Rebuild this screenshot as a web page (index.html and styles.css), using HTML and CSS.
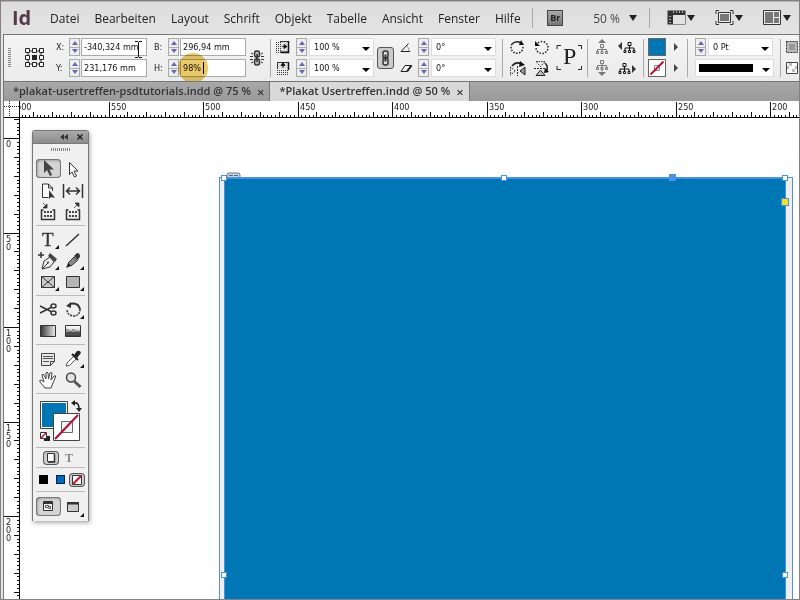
FILE: index.html
```html
<!DOCTYPE html>
<html lang="de">
<head>
<meta charset="utf-8">
<title>Plakat Usertreffen.indd</title>
<link rel="stylesheet" href="styles.css">
</head>
<body>
<div class="window">
  <header class="menubar">
    <span class="logo">Id</span>
    <nav class="menu">
      <a href="#">Datei</a><a href="#">Bearbeiten</a><a href="#">Layout</a><a href="#">Schrift</a><a href="#">Objekt</a><a href="#">Tabelle</a><a href="#">Ansicht</a><a href="#">Fenster</a><a href="#">Hilfe</a>
    </nav>
    <div class="appbar">
      <span class="divider"></span>
      <button class="bridge" aria-label="Bridge">Br</button>
      <button class="zoomlevel">50 %<i class="caret"></i></button>
      <span class="divider"></span>
      <button class="viewbtn" aria-label="Anzeigeoptionen"><svg width="19" height="16" viewBox="0 0 19 16"><path d="M.5.5h18v14H.5z" fill="#333"/><path d="M6 5h12v9H6z" fill="#e2e2e2"/><path d="M6.500 1v2M9.500 1v2M12.500 1v2M15.500 1v2M2 6.500h2M2 9.500h2M2 12.500h2" stroke="#aaa"/></svg><i class="caret"></i></button>
      <button class="viewbtn" aria-label="Bildschirmmodus"><svg width="19" height="16" viewBox="0 0 19 16"><path d="M4 .5H1V4M15 .5h3V4M1 11v3.500h3M18 11v3.500h-3" fill="none" stroke="#333"/><path d="M3.500 2.500h12v10h-12z" fill="#eee" stroke="#333"/><path d="M5 4h9v7H5z" fill="#777"/></svg><i class="caret"></i></button>
      <button class="viewbtn" aria-label="Dokumente anordnen"><svg width="19" height="16" viewBox="0 0 19 16"><path d="M.5.5h17v14H.5z" fill="#eee" stroke="#333"/><path d="M2 2h8v11H2zM11 2h5v5h-5zM11 8h5v5h-5z" fill="#777"/></svg><i class="caret"></i></button>
    </div>
  </header>

  <section class="control">
    <span class="grip tall"></span>
    <svg class="tall" width="20" height="20" viewBox="0 0 20 20"><path d="M3 3h13v13H3z" fill="none" stroke="#333"/><g fill="#fff" stroke="#222"><path d="M.5.5h4v4h-4zM7.500.5h4v4h-4zM14.500.5h4v4h-4zM.5 7.500h4v4h-4zM14.500 7.500h4v4h-4zM.5 14.500h4v4h-4zM7.500 14.500h4v4h-4zM14.500 14.500h4v4h-4z"/></g><path d="M7 7h5v5H7z" fill="#222"/></svg>
    <label for="fx">X:</label>
    <span class="spin"><button aria-label="X erhöhen"></button><button aria-label="X verringern"></button></span>
    <span class="field"><input id="fx" value="-340,324 mm"><svg class="ibeam" width="7" height="17" viewBox="0 0 7 17"><path d="M0 .5h3M4 .5h3M3.500 1v15M0 16.500h3M4 16.500h3" stroke="#111" fill="none"/></svg></span>
    <label for="fb">B:</label>
    <span class="spin"><button aria-label="Breite erhöhen"></button><button aria-label="Breite verringern"></button></span>
    <span class="field"><input id="fb" value="296,94 mm"></span>
    <svg class="tall" width="15" height="16" viewBox="0 0 15 16"><g fill="#bbb" stroke="#333" stroke-width="1.500"><rect x="4.500" y="1" width="5" height="6" rx="2"/><rect x="4.500" y="9" width="5" height="6" rx="2"/><path d="M7 4v8"/></g><path d="M1 3l2 1M0 6.500h3M0 9.500h3M1 13l2-1M13 3l-2 1M14 6.500h-3M14 9.500h-3M13 13l-2-1" stroke="#333"/></svg>
    <span class="sep tall"></span>
    <svg width="14" height="14" viewBox="0 0 14 14"><path d="M4 1.500h8.500v10.500H4" fill="#e0e0e0" stroke="#333"/><path d="M12.500 1v11.500H5" fill="none" stroke="#111" stroke-width="1.500"/><path d="M6 6.500h3M8 4.500l3 2-3 2z" stroke="#111" fill="#111" stroke-width=".8"/><path d="M.5 2v11M2.500 2v11M4.500 2v11" stroke="#333" stroke-dasharray="1 1"/></svg>
    <span class="spin"><button aria-label="Skalierung X erhöhen"></button><button aria-label="Skalierung X verringern"></button></span>
    <span class="combo"><select aria-label="Skalierung X"><option>100 %</option></select></span>
    <button class="linkbtn tall" aria-label="Proportionen beibehalten"><svg width="10" height="16" viewBox="0 0 10 16"><g fill="#ddd" stroke="#333" stroke-width="1.500"><rect x="2" y="1" width="5" height="7" rx="2"/><rect x="2" y="8" width="5" height="7" rx="2"/><path d="M4.500 4.500v7" stroke-width="2"/></g></svg></button>
    <svg width="12" height="12" viewBox="0 0 12 12"><path d="M8.500 2.500L1 10.500h9" fill="none" stroke="#222"/><path d="M7 5q2 2 2 5" fill="none" stroke="#333" stroke-dasharray="1 1"/></svg>
    <span class="spin"><button aria-label="Drehwinkel erhöhen"></button><button aria-label="Drehwinkel verringern"></button></span>
    <span class="combo"><select aria-label="Drehwinkel"><option>0°</option></select></span>
    <span class="sep tall"></span>
    <svg width="15" height="15" viewBox="0 0 15 15"><path d="M13 7A6 6 0 1 1 2 4" fill="none" stroke="#222" stroke-width="1.500" stroke-dasharray="1.500 1.500"/><path d="M2 4q4-4 9-1" stroke="#222" stroke-width="1.500" fill="none"/><path d="M11 0l3 5-5 0z" fill="#111"/></svg>
    <svg width="15" height="15" viewBox="0 0 15 15"><path d="M4 3A6 6 0 1 1 2 8" fill="none" stroke="#222" stroke-width="1.500" stroke-dasharray="1.500 1.500"/><path d="M1 1v5h5z" fill="#111"/></svg>
    <span class="pmark tall"><svg width="25" height="25" viewBox="0 0 25 25"><path d="M0 4V.5h4M21 .5h3.500V4M0 21v3.500h4M21 24.500h3.500V21" fill="none" stroke="#222"/><text x="6" y="19">P</text></svg></span>
    <span class="sep tall"></span>
    <svg class="dim" width="14" height="16" viewBox="0 0 14 16"><path d="M7 0l4 4H3z" fill="#777"/><path d="M5.500 5.500h3v3h-3zM1.500 12.500h2v2h-2zM6 12.500h2v2H6zM10.500 12.500h2v2h-2zM7 8.500v4M2.500 12v-1.500h9V12" fill="none" stroke="#777"/></svg>
    <svg width="18" height="13" viewBox="0 0 18 13"><path d="M4 1v8L0 5z" fill="#333"/><path d="M10 1.500h3v3h-3zM6 9.500h2v2H6zM10.500 9.500h2v2h-2zM15 9.500h2v2h-2zM11.500 5v4M7 9V7h9v2" fill="none" stroke="#111"/></svg>
    <span class="sep tall"></span>
    <button class="swatch fill" aria-label="Fläche"></button>
    <button class="more" aria-label="Flächenfarbe wählen"></button>
    <span class="sep tall"></span>
    <span class="spin"><button aria-label="Kontur erhöhen"></button><button aria-label="Kontur verringern"></button></span>
    <span class="combo"><select aria-label="Konturstärke"><option>0 Pt</option></select></span>
    <span class="sep tall"></span>
    <svg width="14" height="14" viewBox="0 0 14 14"><path d="M1.500 1.500h11v11h-11z" fill="#bbb" stroke="#333" stroke-dasharray="2 1"/><path d="M4 4h6v6H4z" fill="#999"/></svg>

    <label for="fy" class="row2 c3">Y:</label>
    <span class="spin"><button aria-label="Y erhöhen"></button><button aria-label="Y verringern"></button></span>
    <span class="field"><input id="fy" value="231,176 mm"></span>
    <label for="fh">H:</label>
    <span class="spin"><button aria-label="Höhe erhöhen"></button><button aria-label="Höhe verringern"></button></span>
    <span class="field"><input id="fh" value="98%"><i class="textcaret"></i><i class="clickring"></i></span>
    <svg class="c11" width="14" height="14" viewBox="0 0 14 14"><path d="M1.500 8V1.500h11V8" fill="#e0e0e0" stroke="#333"/><path d="M12.500 1v8" stroke="#111" stroke-width="1.500"/><path d="M7 7V4M5 4.500l2-2.500 2 2.500z" stroke="#111" fill="#111"/><path d="M1 9.500h12M1 11.500h12M1 13.500h12" stroke="#333" stroke-dasharray="1 1"/></svg>
    <span class="spin"><button aria-label="Skalierung Y erhöhen"></button><button aria-label="Skalierung Y verringern"></button></span>
    <span class="combo"><select aria-label="Skalierung Y"><option>100 %</option></select></span>
    <svg class="c15" width="12" height="12" viewBox="0 0 12 12"><path d="M1 9.500L5 3.500h6.500L7 9.500z" fill="none" stroke="#222"/><path d="M7 9.500l4.500-6" stroke="#222" stroke-width="2"/></svg>
    <span class="spin"><button aria-label="Scherwinkel erhöhen"></button><button aria-label="Scherwinkel verringern"></button></span>
    <span class="combo"><select aria-label="Scherwinkel"><option>0°</option></select></span>
    <svg class="c19" width="16" height="15" viewBox="0 0 16 15"><path d="M2 5q4-5 10-2" stroke="#222" fill="none" stroke-width="1.500"/><path d="M10 0l5 4-6 2z" fill="#111"/><path d="M.5 6v8l5-4z" fill="none" stroke="#333" stroke-dasharray="1.500 1"/><path d="M15 6v8l-5-4z" fill="#999" stroke="#222"/><path d="M7.500 5v10" stroke="#222" stroke-dasharray="2 1"/></svg>
    <svg width="16" height="15" viewBox="0 0 16 15"><path d="M2 .5h9l-4.500 5z" fill="none" stroke="#333" stroke-dasharray="1.500 1"/><path d="M2 14.500h9L6.500 9z" fill="#bbb" stroke="#222"/><path d="M0 7.500h12" stroke="#222" stroke-dasharray="2 1"/><path d="M11 2q4 4 1 9" stroke="#222" fill="none" stroke-width="1.500"/><path d="M10 12l1-5 4 4z" fill="#111"/></svg>
    <svg class="c23 dim" width="14" height="16" viewBox="0 0 14 16"><path d="M7 16l4-4H3z" fill="#777"/><path d="M5.500.5h3v3h-3zM1.500 7.500h2v2h-2zM6 7.500h2v2H6zM10.500 7.500h2v2h-2zM7 3.500v8M2.500 7V5.500h9V7" fill="none" stroke="#777"/></svg>
    <svg width="18" height="13" viewBox="0 0 18 13"><path d="M14 3v8l4-4z" fill="#333"/><path d="M5 1.500h3v3H5zM1 9.500h2v2H1zM5.500 9.500h2v2h-2zM10 9.500h2v2h-2zM6.500 5v4M2 9V7h9v2" fill="none" stroke="#111"/></svg>
    <button class="swatch none c26" aria-label="Kontur"><svg width="16" height="16" viewBox="0 0 16 16"><path d="M5.500 5.500h5v5h-5z" fill="none" stroke="#888"/><path d="M1.500 14.500l13-13" stroke="#c00f32" stroke-width="2"/></svg></button>
    <button class="more" aria-label="Konturfarbe wählen"></button>
    <button class="combo strokestyle" aria-label="Konturart"><i></i></button>
    <svg class="c32" width="14" height="14" viewBox="0 0 14 14"><path d="M1.500 1.500h11v11h-11z" fill="#fff" stroke="#444"/><path d="M4 2h3v3H4zM10 5h2v3h-2zM7 8h3v3H7zM2 5h2v3H2z" fill="#bbb"/></svg>
  </section>

  <div class="tabs">
    <div class="tab"><a href="#">*plakat-usertreffen-psdtutorials.indd @ 75 %</a><button aria-label="Schließen">×</button></div>
    <div class="tab active"><a href="#">*Plakat Usertreffen.indd @ 50 %</a><button aria-label="Schließen">×</button></div>
  </div>

  <main class="document">
    <div class="corner"></div>
    <div class="ruler-h" id="rh"></div>
    <div class="ruler-v" id="rv"></div>
    <div class="canvas">
      <div class="page"></div>
      <div class="object"></div>
      <i class="handle h1"></i><i class="handle h2"></i><i class="handle h3"></i><i class="handle h4"></i><i class="handle h5"></i>
      <i class="handle solid"></i><i class="handle corneropt"></i>
      <svg class="linkbadge" width="15" height="6" viewBox="0 0 15 6"><path d="M1 5V3q0-2 2-2h9q2 0 2 2v2" fill="#c9d5df" stroke="#678"/><path d="M3 3.500h4M8 3.500h4" stroke="#567"/></svg>

      <aside class="tools">
        <div class="toolhead"><svg width="8" height="6" viewBox="0 0 8 6"><path d="M4 0v6L0 3zM8 0v6L4 3z" fill="#333"/></svg><svg width="6" height="6" viewBox="0 0 6 6"><path d="M.5.5l5 5M5.500.5l-5 5" stroke="#222" stroke-width="1.500"/></svg></div>
        <div class="toolgrip"></div>
        <div class="toolset">
          <button class="on" aria-label="Auswahl"><svg viewBox="0 0 24 20"><path d="M8 1v13l3-3 3 6 2-1-2.500-5.500H18z" fill="#444"/></svg></button>
          <button aria-label="Direktauswahl"><svg viewBox="0 0 24 20"><path d="M8.500 2.500v12l2.500-2.500 2.500 5 2-1-2.500-5h4z" fill="#fff" stroke="#333"/></svg></button>
          <button aria-label="Seite"><svg viewBox="0 0 24 20"><path d="M16.500 10V7l-4-4h-6v13.500h6M12.500 3v4h4" fill="#f8f8f8" stroke="#333"/><path d="M13 9v9l2-2 4 1z" fill="#333"/></svg></button>
          <button aria-label="Lücke"><svg viewBox="0 0 24 20"><path d="M2.500 3v14M21.500 3v14" stroke="#333" stroke-width="1.500"/><path d="M6 10h12M9 6.500L5.500 10 9 13.500M15 6.500l3.500 3.500-3.500 3.500" fill="none" stroke="#333" stroke-width="1.500"/></svg></button>
          <button aria-label="Inhaltsaufnahme"><svg viewBox="0 0 24 20"><path d="M7.500 8H5.500v9.500h13V8h-2" fill="none" stroke="#333" stroke-width="1.500"/><path d="M8 9h2v2H8zM11 9h2v2h-2zM14 9h2v2h-2zM8 13h2v2H8zM11 13h2v2h-2zM14 13h2v2h-2z" fill="#444"/><path d="M7 1l3 3M11 2v4H7z" stroke="#333" stroke-width=".8" fill="#333"/></svg></button>
          <button aria-label="Inhaltsplatzierung"><svg viewBox="0 0 24 20"><path d="M7.500 8H5.500v9.500h13V8h-2" fill="none" stroke="#333" stroke-width="1.500"/><path d="M8 9h2v2H8zM11 9h2v2h-2zM14 9h2v2h-2zM8 13h2v2H8zM11 13h2v2h-2zM14 13h2v2h-2z" fill="#444"/><path d="M13 6l4-4M14 1h4v4z" stroke="#333" stroke-width=".8" fill="#333"/></svg></button>
        </div>
        <div class="toolset">
          <button class="sub" aria-label="Text"><svg viewBox="0 0 24 20"><text class="ttool" x="6" y="16">T</text></svg></button>
          <button aria-label="Linie"><svg viewBox="0 0 24 20"><path d="M5 16L18 4" stroke="#333" stroke-width="1.500"/></svg></button>
          <button class="sub" aria-label="Zeichenstift"><svg viewBox="0 0 24 20"><path d="M5 1v6M2 4h6" stroke="#333" stroke-width="1.500"/><path d="M6 18l2-8 6-4 4 5-4 5z" fill="#eee" stroke="#333"/><path d="M6 18l6-6" stroke="#333"/><circle cx="12" cy="11.500" r="1" fill="#333"/><path d="M14 2l7 6-2 3-7-6z" fill="#444"/></svg></button>
          <button class="sub" aria-label="Buntstift"><svg viewBox="0 0 24 20"><path d="M5 17l2-5 3 3z" fill="#222"/><path d="M7 12l6-6 3.500 3.500L10 15z" fill="#888" stroke="#333"/><path d="M13 5l3-3q3 0 3 3.500L17 9z" fill="#333"/></svg></button>
          <button class="sub" aria-label="Rechteckrahmen"><svg viewBox="0 0 24 20"><path d="M5.500 4.500h13v11h-13zl13 11M18.500 4.500l-13 11" fill="#ccc" stroke="#333"/></svg></button>
          <button class="sub" aria-label="Rechteck"><svg viewBox="0 0 24 20"><path d="M5.500 4.500h13v11h-13z" fill="#b5b5b5" stroke="#333"/></svg></button>
        </div>
        <div class="toolset">
          <button aria-label="Schere"><svg viewBox="0 0 24 20"><path d="M4 6l12 6M4 13l12-6" stroke="#333" stroke-width="1.500"/><ellipse cx="17.500" cy="6" rx="2.500" ry="2" fill="none" stroke="#333" stroke-width="1.500"/><ellipse cx="17.500" cy="13" rx="2.500" ry="2" fill="none" stroke="#333" stroke-width="1.500"/></svg></button>
          <button class="sub" aria-label="Drehen"><svg viewBox="0 0 24 20"><path d="M9 4q8-2 10 5" fill="none" stroke="#333" stroke-width="2"/><path d="M19 9q0 7-7 7-6-1-6-7" fill="none" stroke="#333" stroke-width="1.500" stroke-dasharray="2 1"/><path d="M5 6l5-4v6z" fill="#333"/></svg></button>
          <button aria-label="Verlaufsfarbfeld"><svg viewBox="0 0 24 20"><defs><linearGradient id="g1"><stop stop-color="#333"/><stop offset="1" stop-color="#eee"/></linearGradient><linearGradient id="g2" x2="0" y2="1"><stop stop-color="#fff"/><stop offset=".4" stop-color="#ddd"/><stop offset=".6" stop-color="#555"/><stop offset="1" stop-color="#444"/></linearGradient></defs><path d="M4.500 4.500h15v11h-15z" fill="url(#g1)" stroke="#333"/></svg></button>
          <button aria-label="Weiche Verlaufskante"><svg viewBox="0 0 24 20"><path d="M4.500 4.500h15v11h-15z" fill="url(#g2)" stroke="#333"/><path d="M5 8h3v3H5zM11 8h3v3h-3z" fill="#999"/></svg></button>
        </div>
        <div class="toolset">
          <button aria-label="Notiz"><svg viewBox="0 0 24 20"><path d="M5.500 4.500h13v8l-4 4h-9zM14.500 16.500v-4h4" fill="#e8e8e8" stroke="#444"/><path d="M7 7.500h10M7 9.500h10M7 12.500h6" stroke="#555"/></svg></button>
          <button class="sub" aria-label="Pipette"><svg viewBox="0 0 24 20"><path d="M5 17l1-3 7-7 2.500 2.500-7 7z" fill="#fff" stroke="#555"/><path d="M11 5l6 6" stroke="#222" stroke-width="2"/><path d="M13 6l3-4q3-1 4 2l-4 5z" fill="#222"/></svg></button>
          <button aria-label="Hand"><svg viewBox="0 0 24 20"><path d="M9 18L4 12q-1-2 1-2l3 2-2-7q1-2 2 0l2 4V3q1-2 2 0l.5 6L14 3q1-1 2 0l-1 7 3-4q2-1 1.500 1L17 13l-2 5z" fill="#fff" stroke="#444"/></svg></button>
          <button aria-label="Zoom"><svg viewBox="0 0 24 20"><path d="M13.500 11.500l6 5.500" stroke="#555" stroke-width="3"/><circle cx="10" cy="7.500" r="4.500" fill="#e2e2e2" stroke="#444" stroke-width="1.500"/></svg></button>
        </div>
        <div class="colors">
          <svg width="48" height="46" viewBox="0 0 48 46"><path d="M4.500 5.500h27v27h-27z" fill="#fff" stroke="#444"/><path d="M6 7h24v24H6z" fill="#0076b4"/><path d="M17.500 17.500h26v27h-26z" fill="#fff" stroke="#444"/><path d="M25.500 25.500h11v11h-11z" fill="#f4f4f4" stroke="#666"/><path d="M19 43l23-24" stroke="#b00d32" stroke-width="2"/><path d="M38 7q5-1 5 6" fill="none" stroke="#222" stroke-width="1.500"/><path d="M35 7l4-3v6zM40 12h6l-3 4z" fill="#222"/><path d="M8 40h6v5H8z" fill="#222"/><path d="M4.500 36.500h6v6h-6z" fill="#fff" stroke="#333"/><path d="M5 42l5-5" stroke="#c00f32" stroke-width="1.500"/></svg>
        </div>
        <div class="strip affects">
          <button class="on" aria-label="Container"><svg width="12" height="10" viewBox="0 0 12 10"><path d="M2.500.5h7v8h-7z" fill="#fff" stroke="#333"/><path d="M9.500 1v8H3" fill="none" stroke="#333" stroke-width="1.500"/></svg></button>
          <button class="t" aria-label="Text">T</button>
        </div>
        <div class="strip apply">
          <button aria-label="Farbe"><i class="black"></i></button>
          <button aria-label="Verlauf"><i class="blue"></i></button>
          <button class="on" aria-label="Ohne"><svg width="10" height="10" viewBox="0 0 10 10"><path d="M.5.5h9v9h-9z" fill="#fff" stroke="#333"/><path d="M1 9l8-8" stroke="#d00f20" stroke-width="2"/></svg></button>
        </div>
        <div class="toolset modes">
          <button class="on" aria-label="Normal"><svg viewBox="0 0 24 20"><path d="M7.500 4.500h9v9h-9z" fill="#eee" stroke="#333"/><path d="M7 6h10" stroke="#333" stroke-width="2"/><path d="M9.500 8.500h3v2h-3zM12.500 9.500h2v2h-2" fill="none" stroke="#555"/></svg></button>
          <button class="sub" aria-label="Vorschau"><svg viewBox="0 0 24 20"><path d="M6.500 4.500h11v9h-11z" fill="#ccc" stroke="#333"/><path d="M6 5.500h12" stroke="#333" stroke-width="2"/></svg></button>
        </div>
      </aside>
    </div>
  </main>
</div>
<script src="rulers.js"></script>
</body>
</html>
```
FILE: styles.css
```css
* { box-sizing: border-box; }
body { margin: 0; font-family: "Open Sans", sans-serif; color: #222; }
button { padding: 0; border: 0; background: none; font: inherit; color: inherit; }
a { color: inherit; text-decoration: none; }
svg { display: block; overflow: visible; }
.window { display: flex; flex-direction: column; height: 100vh; border: 1px solid #858082; background: #e4e2e3; overflow: hidden; }

.menubar { display: flex; align-items: center; height: 33px; flex: none; background: linear-gradient(#dcdcdc, #e4e4e4); border-top: 1px solid #b5b3b4; font-size: 12px; }
.logo { width: 49px; padding-left: 11px; font-size: 20px; line-height: 24px; font-weight: 700; color: #573a49; }
.menu { display: flex; gap: 15px; flex: none; }
.appbar { display: flex; align-items: center; margin-left: auto; }
.divider { width: 1px; height: 20px; background: #aaa; }
.bridge { width: 16px; height: 16px; margin: 0 30px 0 14px; border: 1px solid #444; background: linear-gradient(#aaa, #777); font-size: 9px; line-height: 14px; font-weight: 700; }
.zoomlevel { display: flex; align-items: center; gap: 9px; margin-right: 12px; color: #444; }
.zoomlevel + .divider { margin-right: 17px; }
.caret { width: 0; height: 0; border: 4px solid transparent; border-top: 6px solid #222; border-bottom: 0; }
.viewbtn { display: flex; align-items: center; gap: 1px; width: 48px; }
.viewbtn:last-child { width: 36px; }

.control { display: grid; grid-template-columns: 17px 31px 13px 12px 73px 14px 12px 70px 20px 6px 20px 13px 68px 23px 18px 13px 71px 8px 24px 23px 30px 8px 23px 25px 5px 21px 18px 8px 13px 72px 5px 1fr; grid-template-rows: 18px 18px; row-gap: 3px; align-items: center; justify-items: start; flex: none; height: 48px; margin-left: 2px; padding: 3px 0 0 4px; border: 1px solid #777; border-width: 1px 0 1px 1px; background: linear-gradient(#f4f4f4, #ebebeb); font: 9px "DejaVu Sans Condensed", "DejaVu Sans", sans-serif; overflow: hidden; }
.control > * { grid-row: 1; }
.control > .tall { grid-row: 1 / 3; }
.row2, .row2 ~ * { grid-row: 2 !important; }
.c3 { grid-column: 3; }
.c11 { grid-column: 11; }
.c15 { grid-column: 15; }
.c19 { grid-column: 19; }
.c23 { grid-column: 23; }
.c26 { grid-column: 26; }
.c32 { grid-column: 32; }
.grip { width: 3px; height: 20px; background: repeating-linear-gradient(#888 0 1px, #eee 1px 2px); }
.sep { width: 1px; height: 38px; background: #aaa; }
.spin { display: grid; width: 11px; height: 18px; border: 1px solid #aaa; background: #eee; }
.spin button { display: grid; place-items: center; }
.spin button + button { border-top: 1px solid #aaa; }
.spin button::before { content: ""; border: 3px solid transparent; border-bottom: 4px solid #6868b0; border-top: 0; }
.spin button + button::before { border-top: 4px solid #6868b0; border-bottom: 0; }
.field { position: relative; width: 66px; height: 18px; }
.field input { width: 100%; height: 100%; padding: 0 2px; border: 1px solid #aaa; background: #fff; font: inherit; color: #111; }
.ibeam { position: absolute; left: 54px; top: 3px; }
.textcaret { position: absolute; left: 23px; top: 3px; width: 1px; height: 12px; background: #000; }
.clickring { position: absolute; left: -2px; top: -6px; width: 30px; height: 30px; border-radius: 50%; background: #e9c96a; mix-blend-mode: multiply; }
.combo { position: relative; width: 65px; height: 18px; border: 1px solid #ddd; background: #fff; }
.combo select { appearance: none; width: 100%; height: 100%; padding: 0 4px; border: 0; background: none; font: inherit; color: #111; }
.combo::after { content: ""; position: absolute; right: 3px; top: 8px; border: 4px solid transparent; border-top-color: #000; border-bottom: 0; pointer-events: none; }
.strokestyle { grid-column: 29 / 31; width: 79px; }
.strokestyle i { display: block; width: 54px; height: 8px; margin-left: 3px; background: #000; }
.linkbtn { display: grid; place-items: center; width: 17px; height: 22px; border: 1px solid #555; border-radius: 3px; background: #ccc; }
.pmark text { font: 24px "Liberation Serif", serif; fill: #222; }
.swatch { display: grid; place-items: center; width: 18px; height: 18px; border: 1px solid #666; background: #fff; }
.swatch.fill { background: #0076b4; }
.more { margin-left: 5px; border: 4px solid transparent; border-left-color: #444; border-right: 0; }

.tabs { display: flex; flex: none; height: 19px; margin-left: 2px; border-left: 1px solid #777; background: linear-gradient(#a8a8a8, #9a9a9a); font-size: 11px; line-height: 18px; font-weight: 600; }
.tab { display: flex; gap: 6px; padding: 0 5px 0 9px; border-right: 1px solid #777; color: #333; }
.tab button { font-size: 13px; line-height: 18px; }
.tab.active { background: #d9d9d9; }

.document { display: grid; grid-template-columns: 16px 1fr; grid-template-rows: 17px 1fr; flex: 1; min-height: 0; margin-left: 2px; border-left: 1px solid #777; background: #fff; }
.corner { border-right: 1px solid #000; border-bottom: 1px solid #000; background: repeating-linear-gradient(90deg, #222 0 1px, #fff 1px 2px) 0 5px / 100% 1px no-repeat, repeating-linear-gradient(#222 0 1px, #fff 1px 2px) 5px 0 / 1px 100% no-repeat; }
.ruler-h { position: relative; overflow: hidden; border-bottom: 1px solid #000; }
.ruler-v { position: relative; overflow: hidden; border-right: 1px solid #000; }
.tick { position: absolute; background: #111; }
.ruler-h .tick { bottom: 0; width: 1px; height: 2px; }
.ruler-h .mid { height: 5px; }
.ruler-h .major { height: 15px; }
.ruler-v .tick { right: 0; height: 1px; width: 2px; }
.ruler-v .mid { width: 5px; }
.ruler-v .major { width: 15px; }
.num { position: absolute; top: 0; font: 9px/12px "DejaVu Sans Condensed", "DejaVu Sans", sans-serif; }
.ruler-v .num { left: 1px; width: 7px; line-height: 8px; text-align: center; word-break: break-all; }

.canvas { position: relative; overflow: hidden; background: #fff; }
.page { position: absolute; left: 199px; right: 6px; top: 59px; bottom: -4px; border: 1px solid #5b8fc9; background: #efeff2; }
.object { position: absolute; left: 204px; right: 13px; top: 59px; bottom: -4px; border: 1px solid #4a8fe0; border-top-width: 2px; background: #0076b4; }
.handle { position: absolute; width: 6px; height: 6px; border: 1px solid #4a8fe0; background: #fff; }
.h1 { left: 201px; top: 57px; }
.h2 { left: 481px; top: 57px; }
.h3 { right: 11px; top: 57px; }
.h4 { left: 201px; top: 454px; }
.h5 { right: 11px; top: 454px; }
.solid { right: 123px; top: 56px; width: 7px; height: 7px; background: #4f8ff0; }
.corneropt { right: 10px; top: 80px; width: 8px; height: 8px; background: #f0e428; }
.linkbadge { position: absolute; left: 206px; top: 54px; }

.tools { position: absolute; left: 12px; top: 12px; width: 57px; padding-bottom: 1px; border: 1px solid #777; border-bottom: 0; border-radius: 3px 3px 0 0; background: #f0f0f0; box-shadow: 1px 2px 4px #0005; }
.toolhead { display: flex; align-items: center; justify-content: flex-end; gap: 9px; height: 13px; padding-right: 5px; border-bottom: 1px solid #777; background: linear-gradient(#aaa, #8c8c8c); }
.toolgrip { width: 20px; height: 3px; margin: 4px auto 8px; background: repeating-linear-gradient(90deg, #888 0 1px, #eee 1px 2px); }
.toolset { display: grid; grid-template-columns: 25px 25px; justify-content: center; margin: 0 3px; padding-bottom: 3px; border-bottom: 1px solid #bbb; }
.toolset + .toolset { padding-top: 3px; }
.toolset button { position: relative; width: 25px; height: 21px; border-radius: 4px; }
.toolset svg { width: 24px; height: 20px; }
.toolset .on { height: 19px; box-shadow: inset 0 0 0 1px #777, inset 1px 1px 3px #777; background: #d4d4d4; }
.toolset .sub::after { content: ""; position: absolute; right: 2px; bottom: 1px; border: 2px solid #111; border-top-color: transparent; border-left-color: transparent; }
.ttool { font: 19px "Liberation Serif", serif; fill: #333; stroke: #333; stroke-width: 0.3; }
.colors { height: 54px; margin: 0 3px; padding-top: 2px; border-bottom: 1px solid #bbb; }
.strip { display: flex; align-items: center; margin: 0 3px; border-bottom: 1px solid #bbb; }
.strip button { display: grid; place-items: center; width: 14px; height: 12px; }
.strip .on { box-shadow: 0 0 0 1px #555; border-radius: 3px; background: #ccc; }
.affects { height: 20px; gap: 4px; padding-left: 8px; }
.strip .t { font: 700 12px/12px "Liberation Serif", serif; color: #888; }
.apply { height: 24px; gap: 3px; }
.apply i { display: block; width: 9px; height: 9px; background: #000; }
.apply .blue { background: #0468b8; border: 1px solid #025; }
.toolset.modes { padding: 5px 0 2px; border-bottom: 0; }
```
FILE: rulers.js
```js
// 50 mm span 94.5 px at this zoom; a tick is drawn every 2 mm
var STEP = 3.78;

function tick(ruler, side, pos, kind) {
  var t = document.createElement('i');
  t.className = 'tick ' + kind;
  t.style[side] = Math.round(pos) + 'px';
  ruler.appendChild(t);
}

function draw(id, side, origin, first, dir) {
  var ruler = document.getElementById(id);
  var length = side === 'left' ? ruler.clientWidth : ruler.clientHeight;
  for (var i = -6; origin + i * STEP < length; i++) {
    var pos = origin + i * STEP;
    var major = i % 25 === 0;
    tick(ruler, side, pos, major ? 'major' : i % 5 === 0 ? 'mid' : '');
    if (major) {
      var n = document.createElement('span');
      n.className = 'num';
      n.textContent = first + dir * 2 * i;
      n.style[side] = Math.round(pos) + 2 + 'px';
      ruler.appendChild(n);
    }
  }
}

draw('rh', 'left', -6, 600, -1);
draw('rv', 'top', 20, 0, 1);
```
